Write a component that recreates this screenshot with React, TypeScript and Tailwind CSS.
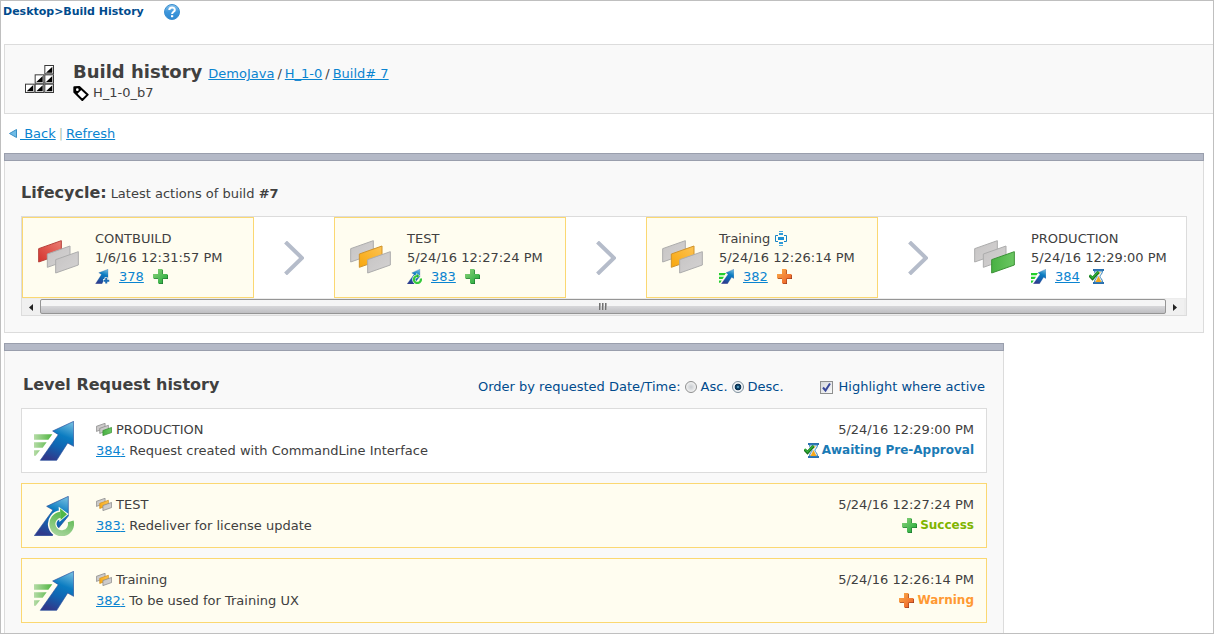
import { useState } from "react";

type Tone = "red" | "amber" | "green";
type RequestKind = "create" | "redeliver" | "deliver";
type Status = "success" | "warning" | "awaiting";

const toneFill: Record<Tone, { fill: string; edge: string }> = {
  red: { fill: "url(#sheetRed)", edge: "#b5403a" },
  amber: { fill: "url(#sheetAmber)", edge: "#d0932a" },
  green: { fill: "url(#sheetGreen)", edge: "#3b9136" },
};

function Defs() {
  return (
    <svg width="0" height="0" className="absolute" aria-hidden="true">
      <defs>
        <linearGradient id="arrowBlue" x1="0.75" y1="0" x2="0.4" y2="1">
          <stop offset="0" stopColor="#6ab8dd" />
          <stop offset="0.35" stopColor="#0b7cc1" />
          <stop offset="0.65" stopColor="#1164b1" />
          <stop offset="1" stopColor="#2f3a8c" />
        </linearGradient>
        <linearGradient id="stripe" x1="0" y1="0" x2="1" y2="0">
          <stop offset="0" stopColor="#b5dba6" />
          <stop offset="1" stopColor="#4fb53f" />
        </linearGradient>
        <linearGradient id="ring" x1="0" y1="1" x2="0.3" y2="0">
          <stop offset="0" stopColor="#a5d49a" />
          <stop offset="1" stopColor="#63bb58" />
        </linearGradient>
        <linearGradient id="plusGreen" x1="0" y1="0" x2="1" y2="1">
          <stop offset="0" stopColor="#8fd37c" />
          <stop offset="1" stopColor="#1ea838" />
        </linearGradient>
        <linearGradient id="plusOrange" x1="0" y1="0" x2="1" y2="1">
          <stop offset="0" stopColor="#fbb04a" />
          <stop offset="1" stopColor="#ec5a26" />
        </linearGradient>
        <linearGradient id="sheet" x1="0" y1="0" x2="1" y2="1">
          <stop offset="0" stopColor="#c6c4c4" />
          <stop offset="1" stopColor="#d4d2d2" />
        </linearGradient>
        <linearGradient id="sheetRed" x1="0" y1="1" x2="1" y2="0">
          <stop offset="0" stopColor="#d5322d" />
          <stop offset="1" stopColor="#ea7d72" />
        </linearGradient>
        <linearGradient id="sheetAmber" x1="0" y1="1" x2="1" y2="0">
          <stop offset="0" stopColor="#f8a70c" />
          <stop offset="1" stopColor="#fcc354" />
        </linearGradient>
        <linearGradient id="sheetGreen" x1="0" y1="0" x2="1" y2="0">
          <stop offset="0" stopColor="#48b143" />
          <stop offset="1" stopColor="#6cc763" />
        </linearGradient>
        <linearGradient id="helpBlue" x1="0" y1="0" x2="0" y2="1">
          <stop offset="0" stopColor="#8cc4ec" />
          <stop offset="0.5" stopColor="#3d97dc" />
          <stop offset="1" stopColor="#2d86cf" />
        </linearGradient>
      </defs>
    </svg>
  );
}

function LevelIcon({ tone, small = false }: { tone: Tone; small?: boolean }) {
  const active = tone === "red" ? 0 : tone === "amber" ? 1 : 2;
  const { fill, edge } = toneFill[tone];
  const offsets = [
    [0, 0],
    [26, 16],
    [51, 33],
  ];
  return (
    <svg
      viewBox="-1 -1 123 102"
      className={small ? "h-[13px] w-4 shrink-0" : "h-[34px] w-[41px] shrink-0"}
      aria-hidden="true"
    >
      {offsets.map(([x, y], i) => (
        <path
          key={i}
          d={`M${x + 1} ${y + 25} L${x + 69} ${y + 1} V${y + 41} L${x + 1} ${y + 65} Z`}
          fill={i === active ? fill : "url(#sheet)"}
          stroke={i === active ? edge : small ? "#8a8a8a" : "#acacac"}
          strokeWidth={small ? 6 : 3}
        />
      ))}
    </svg>
  );
}

function RequestIcon({ kind, small = false }: { kind: RequestKind; small?: boolean }) {
  const size = small ? "size-[15px] shrink-0" : "size-10 shrink-0";
  const stripe = small ? "#22cf2e" : "url(#stripe)";
  if (kind === "deliver") {
    return (
      <svg viewBox="0 0 120 120" className={size} aria-hidden="true">
        <path
          d={
            small
              ? "M0 32 H56 L44 50 H0 Z M0 62 H40 L28 80 H0 Z M0 92 H22 L10 110 H0 Z"
              : "M0 40 H55 L43 56 H0 Z M0 64 H38 L26 80 H0 Z M0 88 H18 L5 104 H0 Z"
          }
          fill={stripe}
        />
        <path
          d="M119 1 V76 L101 66 L68 118 H19 L73 41 L56 30 Z"
          fill="url(#arrowBlue)"
          stroke="#2b4f9c"
          strokeWidth="2"
        />
      </svg>
    );
  }
  if (kind === "create") {
    return (
      <svg viewBox="0 0 120 120" className={size} aria-hidden="true">
        <path
          d="M104 2 V78 L84 64 L56 118 H4 L52 44 L30 30 Z"
          fill="url(#arrowBlue)"
          stroke="#2b4f9c"
          strokeWidth="2"
        />
        <path d="M90 68 V120 M64 94 H118" stroke="#fffdf0" strokeWidth="28" />
        <path d="M90 72 V116 M68 94 H114" stroke="#1c6db5" strokeWidth="16" />
      </svg>
    );
  }
  return (
    <svg viewBox="0 0 120 120" className={size} aria-hidden="true">
      <path d="M103 1 V60 L55 119 H1 L57 42 L38 31 Z" fill="url(#arrowBlue)" stroke="#2b4f9c" strokeWidth="2" />
      <path d="M80 56 A28 28 0 1 0 110 78" fill="none" stroke="#fffdf0" strokeWidth="26" />
      <path d="M74 32 L104 54 L76 78 Z" fill="#fffdf0" />
      <path
        d="M80 56 A28 28 0 1 0 110 76"
        fill="none"
        stroke={small ? "#35c93c" : "url(#ring)"}
        strokeWidth="18"
      />
      <path d="M78 37 L99 55 L80 72 Z" fill={small ? "#22b52c" : "#4fb848"} />
    </svg>
  );
}

function StatusIcon({ status }: { status: Status }) {
  if (status === "awaiting") {
    return (
      <svg viewBox="0 0 15 15" className="size-[15px] shrink-0" aria-hidden="true">
        <path d="M4 0 H15 V2 H4 Z M4 13 H15 V15 H4 Z" fill="#2a6fae" />
        <path
          d="M5.5 2 H13.5 C13.5 5 11 6 11 7.5 C11 9 13.5 10 13.5 13 H5.5 C5.5 10 8 9 8 7.5 C8 6 5.5 5 5.5 2 Z"
          fill="#eaf3fa"
          stroke="#3b86bd"
        />
        <path d="M9.5 7 L12.5 13 H6.5 Z" fill="#f6a81c" />
        <path d="M8 3 H12 L9.5 6 Z" fill="#f9c75e" />
        <path d="M0.5 6.5 L3.5 9.5 L9.5 3" fill="none" stroke="#166f1d" strokeWidth="3" />
        <path d="M0.5 6 L3.5 9 L9.5 2.5" fill="none" stroke="#2fae35" strokeWidth="1.5" />
      </svg>
    );
  }
  const green = status === "success";
  return (
    <svg viewBox="0 0 15 15" className="size-[15px] shrink-0" aria-hidden="true">
      <path d="M6 1 H10 V6 H15 V10 H10 V15 H6 V10 H1 V6 H6 Z" fill={green ? "#17652a" : "#83311a"} />
      <path
        d="M5 0 H9.5 V5 H14.5 V9.5 H9.5 V14.5 H5 V9.5 H0 V5 H5 Z"
        fill={green ? "url(#plusGreen)" : "url(#plusOrange)"}
      />
    </svg>
  );
}

function HelpIcon() {
  return (
    <svg viewBox="0 0 16 16" className="size-4" aria-hidden="true">
      <circle cx="8" cy="8" r="7.5" fill="url(#helpBlue)" stroke="#3b8fd0" />
      <path d="M5.3 6 C5.3 2.6 10.8 2.6 10.8 5.9 C10.8 7.8 8.1 7.8 8.1 10" fill="none" stroke="#fff" strokeWidth="2" />
      <rect x="7" y="11.2" width="2.2" height="2" fill="#fff" />
    </svg>
  );
}

function StairsIcon() {
  const cells = [
    [2, 0],
    [1, 1],
    [2, 1],
    [0, 2],
    [1, 2],
    [2, 2],
  ];
  return (
    <svg viewBox="0 0 87 84" className="h-7 w-[29px] shrink-0" aria-hidden="true">
      {cells.map(([c, r]) => (
        <g key={`${c}-${r}`}>
          <rect x={c * 29 + 1.5} y={r * 28 + 1.5} width="26" height="25" fill="#fff" stroke="#3a3a3a" strokeWidth="3" />
          <path d={`M${c * 29 + 24} ${r * 28 + 5} V${r * 28 + 23} H${c * 29 + 5} Z`} fill="#000" />
        </g>
      ))}
    </svg>
  );
}

function TagIcon() {
  return (
    <svg viewBox="0 0 48 45" className="h-[15px] w-4 shrink-0" aria-hidden="true">
      <path d="M4 4 L19 3 L44 26 L28 42 L4 18 Z" fill="#fff" stroke="#000" strokeWidth="6" strokeLinejoin="round" />
      <path d="M3 3 H20 L27 10 L12 25 L3 17 Z" fill="#000" />
      <circle cx="13" cy="11" r="4" fill="#fff" />
    </svg>
  );
}

function CurrentLevelIcon() {
  return (
    <svg viewBox="0 0 12 15" className="h-[15px] w-3 shrink-0" aria-hidden="true">
      <path d="M3 4.5 H0.5 V10.5 H3 M9 4.5 H11.5 V10.5 H9" fill="none" stroke="#1683c6" />
      <path d="M4 0.5 H8 M4 14.5 H8" stroke="#4fade0" />
      <path d="M4 3 H8 M4 12 H8" stroke="#2f9ad8" strokeWidth="2" />
      <rect x="3" y="6" width="6" height="3" fill="#1c8fd3" />
    </svg>
  );
}

interface Level {
  name: string;
  time: string;
  request: string;
  tone: Tone;
  kind: RequestKind;
  status: Status;
  active: boolean;
  current?: boolean;
}

const levels: Level[] = [
  { name: "CONTBUILD", time: "1/6/16 12:31:57 PM", request: "378", tone: "red", kind: "create", status: "success", active: true },
  { name: "TEST", time: "5/24/16 12:27:24 PM", request: "383", tone: "amber", kind: "redeliver", status: "success", active: true },
  { name: "Training", time: "5/24/16 12:26:14 PM", request: "382", tone: "amber", kind: "deliver", status: "warning", active: true, current: true },
  { name: "PRODUCTION", time: "5/24/16 12:29:00 PM", request: "384", tone: "green", kind: "deliver", status: "awaiting", active: false },
];

const history = [
  { ...levels[3], text: "Request created with CommandLine Interface" },
  { ...levels[1], text: "Redeliver for license update" },
  { ...levels[2], text: "To be used for Training UX" },
];

const statusText: Record<Status, { label: string; color: string }> = {
  awaiting: { label: "Awaiting Pre-Approval", color: "text-[#1a7ab5]" },
  success: { label: "Success", color: "text-[#7fb400]" },
  warning: { label: "Warning", color: "text-[#ff9933]" },
};

const link = "text-[#0a84d0] underline";

function LevelCard({ level }: { level: Level }) {
  return (
    <div
      className={`flex h-[81px] w-[232px] shrink-0 items-start gap-4 border pt-[11px] pl-[15px] ${
        level.active ? "border-[#fbd872] bg-[#fffdf0]" : "border-transparent"
      }`}
    >
      <div className="pt-[11px]">
        <LevelIcon tone={level.tone} />
      </div>
      <div className="leading-[19px] whitespace-nowrap">
        <div className="flex items-center gap-[5px]">
          {level.name}
          {level.current && <CurrentLevelIcon />}
        </div>
        <div>{level.time}</div>
        <div className="flex items-center gap-[9px]">
          <RequestIcon kind={level.kind} small />
          <a href="#request" className={link}>
            {level.request}
          </a>
          <StatusIcon status={level.status} />
        </div>
      </div>
    </div>
  );
}

function ScrollButton({ label, d }: { label: string; d: string }) {
  return (
    <button type="button" aria-label={label} className="flex w-[18px] items-center justify-center bg-[#f0f0f0]">
      <svg viewBox="0 0 4 7" className="h-[7px] w-1" aria-hidden="true">
        <path d={d} fill="#222" />
      </svg>
    </button>
  );
}

const radio =
  "size-3 appearance-none rounded-full border border-[#8e8f8f] bg-[radial-gradient(circle,#c8ccd0_0%,#f4f4f4_75%)] checked:border-[#7d8f9c] checked:bg-[radial-gradient(circle_at_center,#7fd0f0_0%,#12476e_22%,#0c2f4d_42%,#f2f4f6_52%)]";

export default function App() {
  const [order, setOrder] = useState("desc");
  const [highlight, setHighlight] = useState(true);

  return (
    <div className="flex min-h-screen flex-col overflow-hidden border border-[#bfbfbf] bg-white font-['DejaVu_Sans',Verdana,sans-serif] text-[13px] text-[#404040]">
      <Defs />
      <nav className="flex h-[43px] items-start gap-5 pt-[3px] pl-[2px] text-[11px] leading-4 font-bold text-[#004b8d]">
        <span>Desktop&gt;Build History</span>
        <a href="#help" aria-label="Help">
          <HelpIcon />
        </a>
      </nav>

      <header className="ml-[3px] flex h-[70px] items-start gap-[19px] border border-r-0 border-[#dcdcdc] bg-[#f9f9f9] pl-5">
        <div className="pt-5">
          <StairsIcon />
        </div>
        <div className="pt-[15px]">
          <div className="flex items-baseline gap-[6px] leading-[23px]">
            <h1 className="text-[18px] font-bold">Build history</h1>
            <div className="flex gap-[3px]">
              <a href="#project" className={link}>DemoJava</a>
              <span>/</span>
              <a href="#stream" className={link}>H_1-0</a>
              <span>/</span>
              <a href="#build" className={link}>Build# 7</a>
            </div>
          </div>
          <div className="flex items-center gap-1 leading-4">
            <TagIcon />
            <span>H_1-0_b7</span>
          </div>
        </div>
      </header>

      <div className="flex h-[39px] items-center gap-[3px] pl-2">
        <svg viewBox="0 0 8 9" className="h-[9px] w-2" aria-hidden="true">
          <path d="M7.5 0.5 V8.5 L0.5 4.5 Z" fill="#6fbbe6" stroke="#3b8fc4" />
        </svg>
        <a href="#back" className={`${link} whitespace-pre`}>{" Back"}</a>
        <span className="text-[#a8c4b0]">|</span>
        <a href="#refresh" className={link}>Refresh</a>
      </div>

      <section className="mr-[9px] ml-[3px]">
        <div className="h-2 border border-[#9a9fad] bg-[#b4b9c7]" />
        <div className="border border-t-0 border-[#dcdcdc] bg-[#f9f9f9] px-4 pt-5 pb-4">
          <div className="flex items-baseline gap-1 leading-6">
            <h2 className="text-base font-bold">Lifecycle:</h2>
            <p>
              Latest actions of build <b>#7</b>
            </p>
          </div>
          <div className="mt-[10px] border border-[#dcdcdc] bg-white">
            <div className="flex items-center overflow-hidden">
              {levels.map((level, i) => (
                <div key={level.name} className="flex shrink-0 items-center">
                  {i > 0 && (
                    <div className="flex w-20 justify-center">
                      <svg viewBox="0 0 20 34" className="h-[34px] w-5" aria-hidden="true">
                        <path d="M1.5 1 L18 17 L1.5 33" fill="none" stroke="#b5bcca" strokeWidth="4" />
                      </svg>
                    </div>
                  )}
                  <LevelCard level={level} />
                </div>
              ))}
            </div>
            <div className="flex h-[17px] bg-[#ececec] pt-px pr-[2px]">
              <ScrollButton label="Scroll left" d="M4 0 V7 L0 3.5 Z" />
              <div className="flex h-[15px] flex-1 items-center justify-center gap-px rounded-[2px] border border-[#959595] bg-linear-to-b from-[#f5f5f5] from-45% via-[#d6d6d8] via-50% to-[#bfbfc2]">
                <span className="h-[7px] w-[2px] bg-linear-to-r from-[#555] to-[#ccc]" />
                <span className="h-[7px] w-[2px] bg-linear-to-r from-[#555] to-[#ccc]" />
                <span className="h-[7px] w-[2px] bg-linear-to-r from-[#555] to-[#ccc]" />
              </div>
              <ScrollButton label="Scroll right" d="M0 0 V7 L4 3.5 Z" />
            </div>
          </div>
        </div>
      </section>

      <section className="mt-[10px] mr-[9px] ml-[3px] flex max-w-[1000px] flex-1 flex-col">
        <div className="h-2 border border-[#9a9fad] bg-[#b4b9c7]" />
        <div className="flex-1 border-x border-[#dcdcdc] bg-[#f9f9f9] px-4 pt-[17px] pb-2">
          <div className="mb-[2px] flex h-[38px] items-center">
            <h2 className="mb-1 ml-[2px] flex-1 text-base font-bold">Level Request history</h2>
            <div className="mr-[2px] flex items-center text-[#004b8d]">
              <span>Order by requested Date/Time:</span>
              <label className="ml-1 flex items-center gap-1">
                <input type="radio" name="order" className={radio} checked={order === "asc"} onChange={() => setOrder("asc")} />
                Asc.
              </label>
              <label className="ml-1 flex items-center gap-1">
                <input type="radio" name="order" className={radio} checked={order === "desc"} onChange={() => setOrder("desc")} />
                Desc.
              </label>
              <label className="ml-9 flex items-center gap-[6px]">
                <span className="relative flex">
                  <input
                    type="checkbox"
                    className="peer size-[13px] appearance-none border border-[#8e8f8f] bg-linear-to-br from-[#d5d8dc] to-[#fafafa]"
                    checked={highlight}
                    onChange={(e) => setHighlight(e.target.checked)}
                  />
                  <svg
                    viewBox="0 0 13 13"
                    className="pointer-events-none absolute inset-0 hidden size-[13px] peer-checked:block"
                    aria-hidden="true"
                  >
                    <path d="M3 6.5 L5.5 9.5 L10 2.5" fill="none" stroke="#39489a" strokeWidth="2" />
                  </svg>
                </span>
                Highlight where active
              </label>
            </div>
          </div>
          <div className="flex flex-col gap-[10px]">
            {history.map((item) => (
              <article
                key={item.request}
                className={`flex h-[65px] items-center border px-3 ${
                  item.active && highlight ? "border-[#fbd872] bg-[#fffdf0]" : "border-[#dcdcdc] bg-white"
                }`}
              >
                <RequestIcon kind={item.kind} />
                <div className="ml-[22px] flex-1 pb-px leading-[21px]">
                  <div className="flex items-center gap-1">
                    <LevelIcon tone={item.tone} small />
                    {item.name}
                  </div>
                  <div>
                    <a href="#request" className={link}>{item.request}:</a> {item.text}
                  </div>
                </div>
                <div className="pb-px text-right leading-[21px]">
                  <div>{item.time}</div>
                  <div className={`flex items-center justify-end gap-[3px] text-xs leading-[21px] font-bold ${statusText[item.status].color}`}>
                    <StatusIcon status={item.status} />
                    {statusText[item.status].label}
                  </div>
                </div>
              </article>
            ))}
          </div>
        </div>
      </section>
    </div>
  );
}
